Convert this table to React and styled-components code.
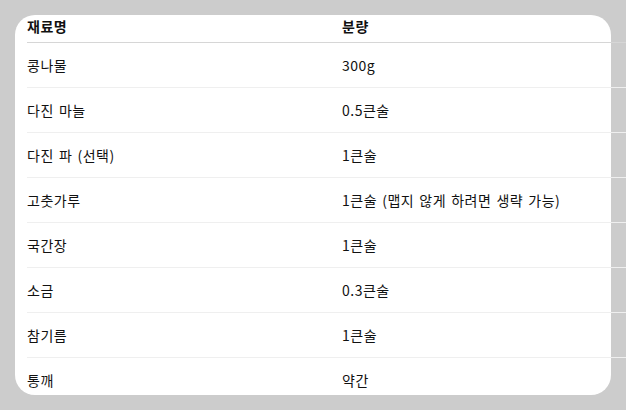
import React from 'react';
import styled, { createGlobalStyle } from 'styled-components';

const GlobalStyle = createGlobalStyle`
    html, body {
        margin: 0;
        padding: 0;
        background: #cccccc;
    }
    body {
        font-family: "Noto Sans CJK KR", "Noto Sans", sans-serif;
        color: #111111;
    }
`;

const Card = styled.div`
    margin: 15px;
    width: 596px;
    height: 380px;
    box-sizing: border-box;
    padding: 0 12px;
    background: #ffffff;
    border-radius: 20px;
`;

const Table = styled.table`
    width: 630px;
    table-layout: fixed;
    border-collapse: collapse;
    font-size: 14px;
    letter-spacing: 0.5px;
    word-spacing: 1.5px;
`;

const HeadCell = styled.th`
    height: 27px;
    padding: 0 0 5px;
    box-sizing: border-box;
    text-align: left;
    font-weight: bold;
    vertical-align: middle;
    border-bottom: 1px solid #d6d6d6;
`;

const Row = styled.tr`
    border-bottom: 1px solid ${({ $last }) => ($last ? 'transparent' : '#efefef')};
`;

const Cell = styled.td`
    height: 45px;
    padding: 1px 0 0;
    box-sizing: border-box;
    vertical-align: middle;
    white-space: nowrap;
`;

const ingredients = [
    ['콩나물', '300g'],
    ['다진 마늘', '0.5큰술'],
    ['다진 파 (선택)', '1큰술'],
    ['고춧가루', '1큰술 (맵지 않게 하려면 생략 가능)'],
    ['국간장', '1큰술'],
    ['소금', '0.3큰술'],
    ['참기름', '1큰술'],
    ['통깨', '약간'],
];

export default function App() {
    return (
        <>
            <GlobalStyle />
            <Card>
                <Table>
                    <thead>
                        <tr>
                            <HeadCell>재료명</HeadCell>
                            <HeadCell>분량</HeadCell>
                        </tr>
                    </thead>
                    <tbody>
                        {ingredients.map(([name, amount], i) => (
                            <Row key={name} $last={i === ingredients.length - 1}>
                                <Cell>{name}</Cell>
                                <Cell>{amount}</Cell>
                            </Row>
                        ))}
                    </tbody>
                </Table>
            </Card>
        </>
    );
}
